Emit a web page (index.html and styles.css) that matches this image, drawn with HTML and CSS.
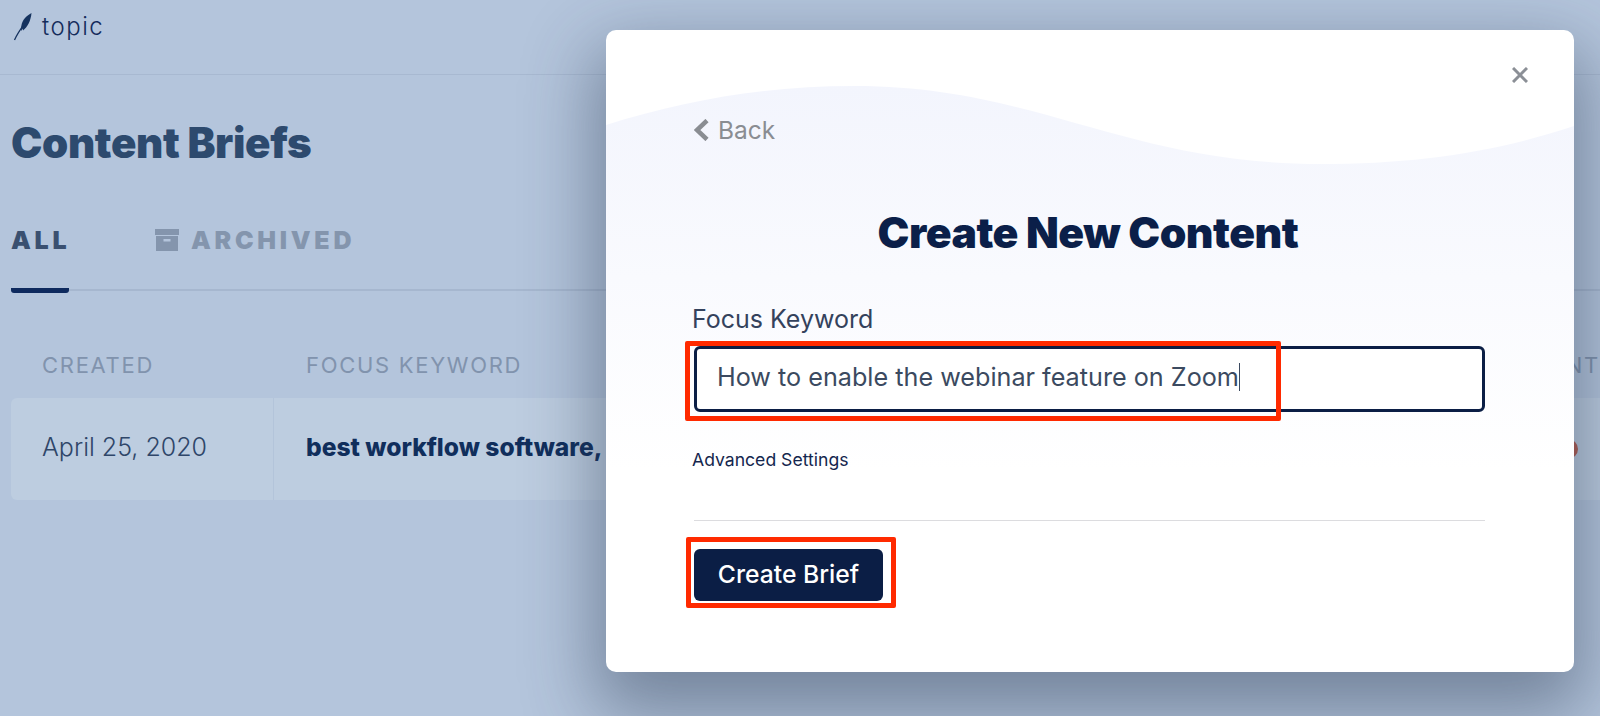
FILE: index.html
```html
<!DOCTYPE html>
<html lang="en">
<head>
<meta charset="utf-8">
<title>Content Briefs</title>
<link rel="stylesheet" href="styles.css">
</head>
<body>
<div class="page">
  <header class="topbar">
    <svg class="logo-icon" viewBox="0 0 24 32" width="24" height="32" aria-hidden="true">
      <path class="logo-fill" d="M19.500 1 C14 4 10.500 8 9.500 13 C9 15.500 9 17.500 9.300 19 L11 16.500 L11 18.500 C15.500 15 18.800 9 19.500 1 Z"/>
      <path class="logo-stem" d="M15 8 C10 15 5.500 21 2.500 28"/>
    </svg>
    <span class="logo-text">topic</span>
  </header>
  <main class="content">
    <h1 class="page-title">Content Briefs</h1>
    <nav class="tabs">
      <span class="tab tab-active">ALL</span>
      <span class="tab tab-muted">
        <svg class="archive-icon" viewBox="0 0 24 22" width="24" height="22" aria-hidden="true">
          <path d="M0 0h24v6H0z"/>
          <path fill-rule="evenodd" d="M1 7h22v15H1z M8.500 10v2.500h7V10z"/>
        </svg>
        ARCHIVED
      </span>
    </nav>
    <div class="table-head">
      <span>CREATED</span>
      <span>FOCUS KEYWORD</span>
      <span class="head-last">CONTENT</span>
    </div>
    <div class="table-row">
      <div class="cell cell-date">April 25, 2020</div>
      <div class="cell cell-keyword">best workflow software,</div>
      <div class="cell cell-status"><span class="status-dot"></span></div>
    </div>
  </main>
</div>

<section class="modal">
  <svg class="modal-wave" viewBox="0 0 968 642" preserveAspectRatio="none" aria-hidden="true">
    <defs>
      <linearGradient id="waveFill" x1="0" y1="0" x2="0" y2="1">
        <stop offset="0" stop-color="#f3f5fd"/>
        <stop offset="1" stop-color="#ffffff"/>
      </linearGradient>
    </defs>
    <path fill="url(#waveFill)" d="M0 95 C80 70 160 56 249 56 C430 56 520 134 714 134 C810 134 890 122 968 96 L968 440 L0 440 Z"/>
  </svg>
  <button class="close" type="button" aria-label="Close">
    <svg viewBox="0 0 16 16" width="16" height="16" aria-hidden="true"><path d="M1 1l14 14M15 1L1 15"/></svg>
  </button>
  <div class="modal-body">
    <a class="back">
      <svg viewBox="0 0 15 22" width="15" height="22" aria-hidden="true"><path d="M13 1.500L3 11l10 9.500"/></svg>
      <span>Back</span>
    </a>
    <h2 class="modal-title">Create New Content</h2>
    <label class="field-label">Focus Keyword</label>
    <div class="input">How to enable the webinar feature on Zoom<span class="caret"></span></div>
    <div class="advanced">Advanced Settings</div>
    <hr class="divider">
    <button class="primary" type="button">Create Brief</button>
  </div>
  <div class="mark mark-input"></div>
  <div class="mark mark-button"></div>
</section>
</body>
</html>
```

FILE: styles.css
```css
* { box-sizing: border-box; }
html, body { margin: 0; height: 100%; overflow: hidden; }
body {
  background: #b4c5dc;
  font-family: Inter, "Liberation Sans", sans-serif;
  position: relative;
}
.page { width: 1600px; height: 716px; overflow: hidden; }

.topbar {
  height: 75px;
  border-bottom: 1px solid #a8b9d1;
  display: flex;
  align-items: flex-start;
  padding: 12px 0 0 12px;
  gap: 6px;
}
.logo-icon { flex: none; }
.logo-fill { fill: #16335f; }
.logo-stem { fill: none; stroke: #16335f; stroke-width: 1.300; }
.logo-text {
  font-size: 24px;
  line-height: 30px;
  font-weight: 300;
  letter-spacing: 1.500px;
  color: #142c5b;
}

.content { padding: 0 0 0 11px; }
.page-title {
  margin: 45px 0 0;
  font-size: 42px;
  line-height: 46px;
  font-weight: 900;
  letter-spacing: -0.350px;
  color: #2d4a6e;
}
.tabs {
  margin-top: 59px;
  height: 66px;
  border-bottom: 2px solid #a6b7cf;
  display: flex;
  gap: 86px;
  align-items: flex-start;
}
.tab {
  font-size: 25px;
  line-height: 30px;
  font-weight: 900;
  letter-spacing: 3.700px;
  display: flex;
  gap: 12px;
  height: 68px;
  align-items: flex-start;
}
.tab-active {
  width: 58px;
  color: #3a5070;
  border-bottom: 5px solid #0e2a5e;
  border-radius: 0 0 3px 3px;
}
.tab-muted { color: #8495ad; }
.archive-icon { fill: #8495ad; margin-top: 4px; }

.table-head {
  margin-top: 61px;
  display: grid;
  grid-template-columns: 264px 1fr auto;
  padding-left: 31px;
  font-size: 22px;
  line-height: 26px;
  font-weight: 400;
  letter-spacing: 1.700px;
  color: #8193ad;
}
.table-row {
  margin-top: 20px;
  height: 102px;
  background: #bdcde0;
  border-radius: 6px 0 0 6px;
  display: grid;
  grid-template-columns: 263px 1fr auto;
  align-items: center;
}
.cell { height: 100%; display: flex; align-items: center; }
.cell-date {
  padding: 0 0 4px 31px;
  border-right: 1px solid #b3c4da;
  font-size: 25px;
  font-weight: 300;
  color: #2f4669;
}
.cell-keyword {
  padding: 0 0 4px 32px;
  font-size: 24.600px;
  font-weight: 800;
  color: #102e5c;
  white-space: nowrap;
}
.cell-status { padding-right: 22px; }
.status-dot { width: 20px; height: 20px; border-radius: 50%; background: #b55b4e; }

.modal {
  position: absolute;
  left: 606px;
  top: 30px;
  width: 968px;
  height: 642px;
  background: #fff;
  border-radius: 10px;
  box-shadow: 0 30px 70px 12px rgba(40, 56, 80, .45);
}
.modal-wave {
  position: absolute;
  inset: 0;
  width: 100%;
  height: 100%;
  border-radius: 10px;
}
.close {
  position: absolute;
  top: 36px;
  right: 45px;
  width: 18px;
  height: 18px;
  padding: 1px;
  border: 0;
  background: none;
}
.close svg { display: block; fill: none; stroke: #8b8f96; stroke-width: 3; }
.modal-body {
  position: relative;
  padding: 88px 89px 0 88px;
  display: flex;
  flex-direction: column;
}
.back {
  display: flex;
  align-items: center;
  gap: 9px;
  height: 24px;
  font-size: 24.500px;
  line-height: 24px;
  font-weight: 400;
  color: #8a8d92;
}
.back svg { fill: none; stroke: #8a8d92; stroke-width: 4.500; }
.modal-title {
  margin: 66px 0 0;
  padding-right: 3px;
  font-size: 42.700px;
  line-height: 50px;
  font-weight: 900;
  letter-spacing: -0.500px;
  text-align: center;
  color: #0b1f49;
}
.field-label {
  margin: 46px 0 0 -2px;
  font-size: 25px;
  line-height: 30px;
  font-weight: 400;
  color: #34425c;
}
.input {
  margin-top: 12px;
  height: 66px;
  border: 3px solid #0b1e45;
  border-radius: 6px;
  background: #fff;
  padding: 0 0 4px 20px;
  display: flex;
  align-items: center;
  font-size: 25.200px;
  font-weight: 400;
  color: #3b4a60;
}
.caret { width: 1px; height: 28px; background: #3b4a60; }
.advanced {
  margin: 36px 0 0 -2px;
  font-size: 17.600px;
  line-height: 24px;
  font-weight: 400;
  color: #14264e;
}
.divider {
  margin: 48px 0 0;
  border: 0;
  border-top: 1px solid #dcdcdf;
  width: 100%;
}
.primary {
  margin-top: 28px;
  width: 189px;
  height: 52px;
  padding: 0 0 3px;
  border: 0;
  border-radius: 6px;
  background: #0b1e45;
  color: #fff;
  font-family: inherit;
  font-size: 24.700px;
  font-weight: 500;
}
.mark {
  position: absolute;
  border: 5px solid #ff2a00;
  border-radius: 2px;
}
.mark-input { left: 79px; top: 311px; width: 596px; height: 80px; }
.mark-button { left: 80px; top: 507px; width: 210px; height: 71px; }
```
